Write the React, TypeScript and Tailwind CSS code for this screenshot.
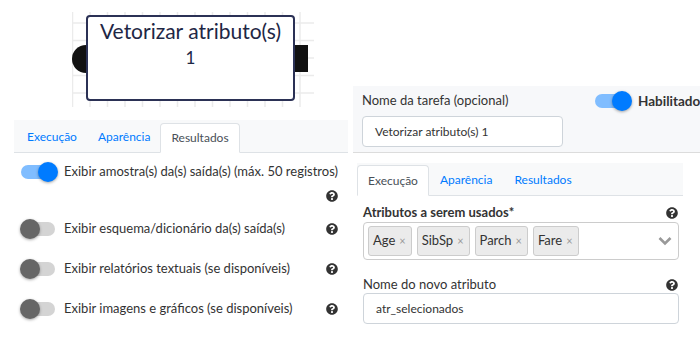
import React from 'react';
import { FaQuestionCircle } from 'react-icons/fa';

const font = { fontFamily: 'Lato, "Noto Sans", sans-serif' };

function Toggle({ on }: { on: boolean }) {
  return (
    <div className="relative w-[34px] h-[14px] shrink-0">
      <div className={`absolute inset-0 rounded-full ${on ? 'bg-[#80bdff]' : 'bg-[#d4d4d4]'}`} />
      <div
        className={`absolute top-[-3px] w-[20px] h-[20px] rounded-full shadow-[0_1px_3px_rgba(0,0,0,0.35)] ${
          on ? 'right-[-3px] bg-[#007bff]' : 'left-[-1px] bg-[#666]'
        }`}
      />
    </div>
  );
}

function Help() {
  return <FaQuestionCircle className="w-[12px] h-[12px] text-[#333] shrink-0" />;
}

function Grid() {
  const xs = Array.from({ length: 14 }, (_, i) => 0.5 + i * 17.5);
  const ys = Array.from({ length: 6 }, (_, i) => 11 + i * 17.5);
  return (
    <svg className="absolute left-[72px] top-[12px]" width="242" height="95">
      {xs.map((x) => (
        <line key={'x' + x} x1={x} y1={0} x2={x} y2={95} stroke="#ebebeb" strokeWidth="1.5" />
      ))}
      {ys.map((y) => (
        <line key={'y' + y} x1={0} y1={y} x2={242} y2={y} stroke="#ebebeb" strokeWidth="1.5" />
      ))}
    </svg>
  );
}

function Canvas() {
  return (
    <div className="relative h-[120px]">
      <Grid />
      {/* ports */}
      <div className="absolute left-[72px] top-[45px] w-[28px] h-[28px] rounded-full bg-[#111]" />
      <div className="absolute left-[294px] top-[45px] w-[14px] h-[27px] bg-[#111]" />
      {/* node */}
      <div className="absolute left-[86px] top-[15px] w-[209px] h-[86px] bg-white border-2 border-[#2b3155] rounded-[4px] flex flex-col items-center text-[#1e2745]">
        <div className="text-[21px] leading-[26px] mt-[1px]">Vetorizar atributo(s)</div>
        <div className="text-[17px] leading-[22px] mt-[3px]">1</div>
      </div>
    </div>
  );
}

function LeftPanel() {
  const rows = [
    'Exibir esquema/dicionário da(s) saída(s)',
    'Exibir relatórios textuais (se disponíveis)',
    'Exibir imagens e gráficos (se disponíveis)',
  ];
  return (
    <div className="ml-[14px] w-[334px]">
      <div className="h-[33px] bg-[#f8f9fa] border-b border-[#dee2e6] flex items-end pl-[2px] text-[12px]">
        <div className="px-[11px] h-[30px] flex items-center text-[#007bff]">Execução</div>
        <div className="px-[10px] h-[30px] flex items-center text-[#007bff]">Aparência</div>
        <div className="px-[10px] h-[30px] mb-[-1px] flex items-center bg-white border border-[#dee2e6] border-b-white rounded-t-[4px] text-[#495057]">
          Resultados
        </div>
      </div>
      <div className="text-[13px] text-[#333]">
        <div className="flex items-center pl-[7px] mt-[11px] h-[16px]">
          <Toggle on />
          <span className="ml-[9px] whitespace-nowrap">Exibir amostra(s) da(s) saída(s) (máx. 50 registros)</span>
        </div>
        <div className="flex justify-end pr-[10px] mt-[10px]">
          <Help />
        </div>
        {rows.map((r, i) => (
          <div key={r} className={`flex items-center pl-[7px] pr-[10px] h-[20px] ${i === 0 ? 'mt-[17px]' : 'mt-[20px]'}`}>
            <Toggle on={false} />
            <span className="ml-[9px] flex-1">{r}</span>
            <Help />
          </div>
        ))}
      </div>
    </div>
  );
}

function RightPanel() {
  const tags = ['Age', 'SibSp', 'Parch', 'Fare'];
  return (
    <div className="mt-[86px] w-[360px] text-[13px] text-[#333]">
      <div className="bg-[#f7f8fa] border-b border-[#dcdcdc] h-[67px] px-[9px] pt-[5px]">
        <div className="flex items-center h-[20px]">
          <span className="w-[233px]">Nome da tarefa (opcional)</span>
          <Toggle on />
          <span className="ml-[9px] font-bold whitespace-nowrap text-[13.5px]">Habilitado</span>
        </div>
        <div className="mt-[5px] w-[201px] h-[31px] bg-white border border-[#ced4da] rounded-[4px] flex items-center px-[12px] text-[12px]">
          Vetorizar atributo(s) 1
        </div>
      </div>
      <div className="pt-[10px] pl-[4px]">
        <div className="w-[326px] h-[33px] bg-[#f8f9fa] border-b border-[#dee2e6] flex items-end text-[12px]">
          <div className="px-[10px] h-[31px] mb-[-1px] flex items-center bg-white border border-[#dee2e6] border-b-white rounded-t-[4px] text-[#495057]">
            Execução
          </div>
          <div className="px-[11px] h-[30px] flex items-center text-[#007bff]">Aparência</div>
          <div className="px-[11px] h-[30px] flex items-center text-[#007bff]">Resultados</div>
        </div>
        <div className="ml-[6px] w-[316px]">
          <div className="flex items-center justify-between mt-[9px] h-[16px] pr-[1px]">
            <span className="font-bold">Atributos a serem usados*</span>
            <Help />
          </div>
          <div className="mt-[1px] h-[38px] border border-[#ccc] rounded-[4px] flex items-center pl-[4px] pr-[6px] gap-[5px]">
            {tags.map((t) => (
              <div key={t} className="h-[30px] flex items-center pl-[4px] pr-[5px] gap-[4px] bg-[#ebebeb] border border-[#ccc] rounded-[3px]">
                <span>{t}</span>
                <span className="text-[#999] text-[11px]">×</span>
              </div>
            ))}
            <svg className="ml-auto w-[14px] h-[10px]" viewBox="0 0 14 10">
              <path d="M1.5 2l5.5 5.5 5.5-5.5" fill="none" stroke="#999" strokeWidth="2.6" />
            </svg>
          </div>
          <div className="flex items-center justify-between mt-[17px] h-[16px] pr-[1px]">
            <span>Nome do novo atributo</span>
            <Help />
          </div>
          <div className="h-[31px] bg-white border border-[#ced4da] rounded-[4px] flex items-center px-[12px] text-[12px]">
            atr_selecionados
          </div>
        </div>
      </div>
    </div>
  );
}

export default function App() {
  return (
    <div className="w-[700px] h-[337px] overflow-hidden bg-white flex" style={font}>
      <div className="w-[353px] shrink-0">
        <Canvas />
        <LeftPanel />
      </div>
      <RightPanel />
    </div>
  );
}
